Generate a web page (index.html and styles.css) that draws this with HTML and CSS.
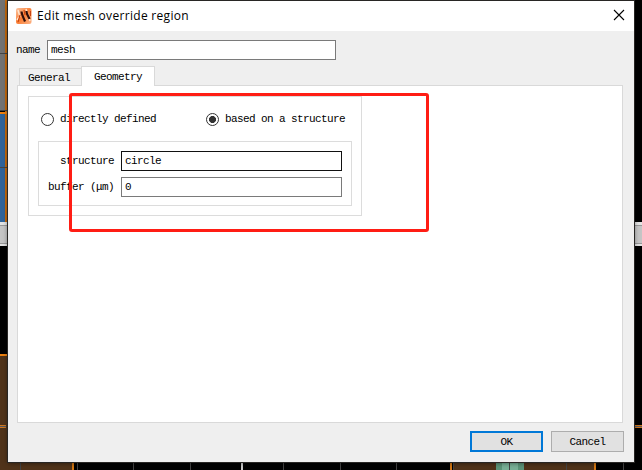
FILE: index.html
```html
<!DOCTYPE html>
<html lang="en">
<head>
<meta charset="utf-8">
<title>Edit mesh override region</title>
<link rel="stylesheet" href="styles.css">
</head>
<body>
<svg class="canvas" width="642" height="470" viewBox="0 0 642 470" shape-rendering="crispEdges" aria-hidden="true">
  <rect width="642" height="470" fill="#000"/>
  <path fill="#2a1c10" d="M8 0h230v1H8z"/>
  <path fill="#727272" d="M0 0h5v111H0z"/>
  <path fill="#2e639b" d="M0 114h5v108H0z"/>
  <path fill="#c46a0d" d="M5 0h2v222H5z"/>
  <path fill="#ed800f" d="M0 112h7v2H0zM0 354h7v2H0z"/>
  <path fill="#444" d="M0 53h7v1H0zM0 110h7v1H0zM0 167h7v1H0z"/>
  <path fill="#e3e3e3" d="M0 222h642v24H0z"/>
  <path fill="#c5c5c5" d="M0 225h642v19H0z"/>
  <path fill="#999" d="M0 225h642v1H0zM0 243h642v1H0z"/>
  <path fill="#50331a" d="M0 356h72v114H0zM453 430h141v40H453z"/>
  <path fill="#ce7720" d="M0 425h6v1H0zM0 427h6v1H0zM634 425h8v1h-8zM634 427h8v1h-8z"/>
  <path fill="#555860" d="M0 426h6v1H0zM634 426h8v1h-8z"/>
  <path fill="#5b9478" d="M496 460h28v10h-28z"/>
  <path fill="#78b096" d="M502 460h16v10h-16z"/>
  <path fill="#444" d="M20 460h1v10h-1zM77 460h1v10h-1zM133 460h1v10h-1zM190 460h1v10h-1zM283 460h1v10h-1zM340 460h1v10h-1zM396 460h1v10h-1zM453 460h1v10h-1zM509 460h1v10h-1zM566 460h1v10h-1zM623 460h1v10h-1z"/>
  <path fill="#d47712" d="M72 460h2v10h-2zM450 460h2v10h-2zM594 460h2v10h-2z"/>
  <path fill="#ccc" d="M241 460h2v10h-2z"/>
</svg>
<main class="dialog">
  <header class="titlebar">
    <svg class="logo" width="16" height="16" viewBox="0 0 16 16" aria-hidden="true">
      <defs>
        <linearGradient id="flame" x1="0" y1="0" x2="1" y2="1">
          <stop offset="0" stop-color="#fbc5a3"/><stop offset=".5" stop-color="#fb7f35"/><stop offset="1" stop-color="#fcb488"/>
        </linearGradient>
      </defs>
      <rect width="15.5" height="16" rx="2" fill="url(#flame)"/>
      <path d="M2 2l2 7M10 1l4 12M1 12l2-3" fill="none" stroke="#ffe5cf" stroke-width="1.5"/>
      <path d="M5.5 3.5c0 3 2 6 3.5 10M10.500 3c0 4 2 5 3 8" fill="none" stroke="#31100a" stroke-width="2.2"/>
      <path d="M2 14l2-7M8 2l1 5M14.500 3v5" fill="none" stroke="#c9430f" stroke-width="1.1"/>
    </svg>
    <h1 class="title">Edit mesh override region</h1>
    <svg class="close" width="12" height="12" viewBox="0 0 12 12" role="img" aria-label="Close"><path d="M1 1l10 10M11 1L1 11" fill="none" stroke="#000" stroke-width="1.1"/></svg>
  </header>
  <div class="name-row"><span class="name-label">name</span><div class="field name-field">mesh</div></div>
  <div class="tabs"><div class="tab">General</div><div class="tab active">Geometry</div></div>
  <section class="pane">
    <div class="group">
      <div class="options">
        <div class="option first"><span class="radio"></span>directly defined</div>
        <div class="option"><span class="radio checked"></span>based on a structure</div>
      </div>
      <div class="properties">
        <span class="label">structure</span><div class="field focused">circle</div>
        <span class="label">buffer (μm)</span><div class="field">0</div>
      </div>
    </div>
  </section>
  <footer class="actions"><div class="button primary">OK</div><div class="button">Cancel</div></footer>
</main>
<div class="highlight"></div>
</body>
</html>
```
FILE: styles.css
```css
* { box-sizing: border-box; }
body {
  margin: 0;
  width: 642px;
  height: 470px;
  overflow: hidden;
  position: relative;
  padding: 1px 8px 8px;
  background: #000;
  color: #000;
  font: 11px/14px "Liberation Mono", monospace;
  letter-spacing: -0.6px;
}
.canvas { position: absolute; left: 0; top: 0; }
.dialog {
  position: relative;
  width: 626px;
  height: 461px;
  background: #efefef;
  box-shadow: 0 0 0 1px #282624, 0 1px 5px #0008;
  display: flex;
  flex-direction: column;
}
.titlebar {
  height: 30px;
  flex: none;
  background: #fff;
  display: flex;
  align-items: center;
  padding: 0 9px 0 8px;
}
.logo { margin-top: -1px; }
.title {
  margin: 0 auto 0 5px;
  font: 12px/18px "Open Sans", "Noto Sans", sans-serif;
  letter-spacing: 0.31px;
}
.close { margin-top: -2px; }
.name-row { display: flex; margin: 9px 0 0 8px; height: 20px; }
.name-label { width: 31px; line-height: 21px; white-space: nowrap; }
.field {
  height: 20px;
  border: 1px solid #7a7a7a;
  background: #fff;
  padding: 0 3px;
  line-height: 19px;
}
.name-field { width: 289px; }
.tabs {
  display: flex;
  align-items: flex-end;
  height: 20px;
  margin: 6px 0 0 11px;
  position: relative;
  z-index: 1;
}
.tab {
  width: 62px;
  height: 18px;
  border: 1px solid #d9d9d9;
  border-right: 0;
  padding-left: 8px;
  line-height: 18px;
  background: #f0f0f0;
}
.tab.active {
  width: 74px;
  height: 20px;
  border: 1px solid #d9d9d9;
  border-bottom: 0;
  padding-left: 12px;
  line-height: 20px;
  background: #fff;
}
.pane {
  width: 606px;
  height: 338px;
  margin: -1px 0 0 9px;
  border: 1px solid #d9d9d9;
  background: #fff;
  padding: 10px;
}
.group { width: 334px; height: 120px; border: 1px solid #dcdcdc; padding: 14px 9px 9px; }
.options { display: flex; height: 16px; margin-left: 3px; }
.option { display: flex; align-items: center; white-space: nowrap; }
.option.first { width: 165px; }
.radio {
  width: 13px;
  height: 13px;
  margin-right: 6px;
  border: 1px solid #333;
  border-radius: 50%;
}
.radio.checked { background: radial-gradient(circle, #333 0 3.2px, #fff 3.8px); }
.properties {
  width: 314px;
  height: 65px;
  margin-top: 14px;
  border: 1px solid #dcdcdc;
  padding: 9px;
  display: grid;
  grid-template-columns: 66px 221px;
  grid-template-rows: 20px 20px;
  column-gap: 7px;
  row-gap: 6px;
}
.label { text-align: right; line-height: 20px; white-space: nowrap; }
.focused { border-color: #111; }
.actions { display: flex; gap: 8px; margin: 8px 0 0 462px; }
.button {
  width: 73px;
  height: 21px;
  border: 1px solid #adadad;
  background: #e1e1e1;
  text-align: center;
  line-height: 20px;
}
.button.primary { border: 2px solid #0078d7; line-height: 18px; }
.highlight {
  position: absolute;
  left: 69px;
  top: 93px;
  width: 360px;
  height: 139px;
  border: 3px solid #ff1d14;
  border-radius: 3px;
}
```
